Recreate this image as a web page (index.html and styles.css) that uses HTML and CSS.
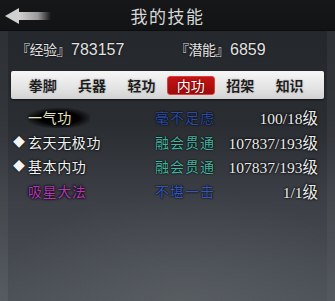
FILE: index.html
```html
<!DOCTYPE html>
<html lang="zh-CN">
<head>
<meta charset="utf-8">
<title>我的技能</title>
<link rel="stylesheet" href="styles.css">
</head>
<body>
<div class="screen">
  <header class="topbar">
    <div class="back">
      <svg width="46" height="18" viewBox="0 0 46 18">
        <defs>
          <linearGradient id="shaft" x1="0" y1="0" x2="1" y2="0">
            <stop offset="0" stop-color="#d4d4d4"/>
            <stop offset="0.6" stop-color="#9a9a9a"/>
            <stop offset="1" stop-color="#9a9a9a" stop-opacity="0"/>
          </linearGradient>
        </defs>
        <polygon points="0,9 14,1 14,17" fill="#d0d0d0"/>
        <rect x="13" y="5" width="33" height="8" fill="url(#shaft)"/>
      </svg>
    </div>
    <h1 class="title">我的技能</h1>
    <div></div>
  </header>

  <main class="content">
    <div class="stats">
      <div class="stat stat-exp"><span class="stat-label">『经验』</span>783157</div>
      <div class="stat"><span class="stat-label">『潜能』</span>6859</div>
    </div>

    <nav class="tabs">
      <div class="tab">拳脚</div>
      <div class="tab">兵器</div>
      <div class="tab">轻功</div>
      <div class="tab tab-active">内功</div>
      <div class="tab">招架</div>
      <div class="tab">知识</div>
    </nav>

    <ul class="skills">
      <li class="skill">
        <span class="marker"></span>
        <span class="name name-yellow"><span class="smudge">一气功</span></span>
        <span class="rank rank-navy">毫不足虑</span>
        <span class="level">100/18级</span>
      </li>
      <li class="skill">
        <span class="marker">◆</span>
        <span class="name name-white">玄天无极功</span>
        <span class="rank rank-teal">融会贯通</span>
        <span class="level">107837/193级</span>
      </li>
      <li class="skill">
        <span class="marker">◆</span>
        <span class="name name-white">基本内功</span>
        <span class="rank rank-teal">融会贯通</span>
        <span class="level">107837/193级</span>
      </li>
      <li class="skill">
        <span class="marker"></span>
        <span class="name name-purple">吸星大法</span>
        <span class="rank rank-blue">不堪一击</span>
        <span class="level">1/1级</span>
      </li>
    </ul>
  </main>
</div>
</body>
</html>
```

FILE: styles.css
```css
* { box-sizing: border-box; }

html, body {
  margin: 0;
  padding: 0;
}

body {
  width: 335px;
  height: 301px;
  overflow: hidden;
  background: #3a3e43;
  font-family: "Noto Sans CJK SC", "Noto Sans", sans-serif;
}

.screen {
  width: 335px;
  height: 301px;
  display: flex;
  flex-direction: column;
}

.topbar {
  height: 31px;
  flex: none;
  background: linear-gradient(#161718, #121314);
  border-bottom: 1px solid #0c0d0e;
  display: grid;
  grid-template-columns: 1fr auto 1fr;
  align-items: center;
}

.back {
  padding-left: 5px;
  padding-top: 1px;
  display: flex;
  align-items: center;
}

.back svg { display: block; }

.title {
  margin: 0;
  font-size: 17px;
  font-weight: normal;
  letter-spacing: 1.5px;
  color: #d6d6d6;
  line-height: 20px;
  padding-top: 2px;
}

.content {
  flex: 1;
  border-left: 8px solid rgba(255, 255, 255, 0.045);
  border-right: 8px solid rgba(255, 255, 255, 0.045);
  background:
    radial-gradient(ellipse 60% 40% at 55% 100%, rgba(110, 115, 118, 0.35), rgba(110, 115, 118, 0) 100%),
    linear-gradient(#24272b 0%, #2a2d32 35%, #3b3f45 60%, #4c5157 100%);
}

.stats {
  display: flex;
  margin-top: 8px;
  padding-left: 8px;
  height: 20px;
  align-items: center;
  color: #e2e2e2;
  font-family: "Liberation Sans", "Noto Sans CJK SC", sans-serif;
  font-size: 16px;
  text-shadow: 0 0 2px #000;
}

.stat-exp { width: 159px; }

.stat-label {
  font-family: "Noto Sans CJK SC", sans-serif;
  font-size: 14px;
  letter-spacing: -0.5px;
  margin-right: 1px;
}

.tabs {
  margin: 12px 3px 0 3px;
  height: 28px;
  padding-left: 7px;
  display: flex;
  align-items: center;
  background: linear-gradient(#f6f6f6, #e4e4e4 60%, #d2d2d2);
  border-radius: 2px;
  box-shadow: 0 1px 2px rgba(0, 0, 0, 0.6);
}

.tab {
  width: 49.4px;
  height: 19px;
  display: flex;
  align-items: center;
  justify-content: center;
  font-size: 14px;
  font-weight: bold;
  color: #1c1c1c;
  letter-spacing: 0;
  text-shadow: 0 0 1px #fff, 0 0 2px #999;
}

.tab-active {
  width: 48px;
  margin: 0 0.7px;
  color: #fff;
  font-weight: normal;
  background: linear-gradient(#c41414, #a00a0a);
  border: 1px solid #d84040;
  border-radius: 3px;
  text-shadow: 0 0 2px #400;
}

.skills {
  list-style: none;
  margin: 6px 0 0 0;
  padding: 0 9px 0 5px;
}

.skill {
  height: 24.5px;
  display: grid;
  grid-template-columns: 15px 127px auto 1fr;
  align-items: center;
}

.marker {
  color: #f4f4f4;
  font-size: 12px;
  line-height: 1;
  text-shadow: 0 0 2px #000;
}

.name {
  font-size: 14px;
  letter-spacing: 0.6px;
  text-shadow: 0 0 2px #000, 0 0 3px #000;
}

.name-white { color: #f2f2f2; }

.name-yellow { color: #e6e2bc; }

.smudge {
  padding: 1px 18px 1px 0;
  background: radial-gradient(ellipse 55% 50% at 50% 55%, #000 55%, rgba(0, 0, 0, 0) 100%);
}

.name-purple {
  color: #b03cb4;
  text-shadow: 0 0 1px #000, 0 0 2px #1a001a, 0 0 3px #000;
}

.rank {
  font-size: 14px;
  letter-spacing: 1px;
  text-shadow: 0 0 1px #000, 0 0 2px #000;
}

.rank-navy { color: #2c4ca4; }
.rank-teal { color: #46b4a2; }
.rank-blue { color: #3656bc; }

.level {
  justify-self: end;
  font-family: "Liberation Serif", "Noto Sans CJK SC", serif;
  font-size: 15.5px;
  color: #ececec;
  text-shadow: 0 0 2px #000, 0 0 3px #000;
}
```
